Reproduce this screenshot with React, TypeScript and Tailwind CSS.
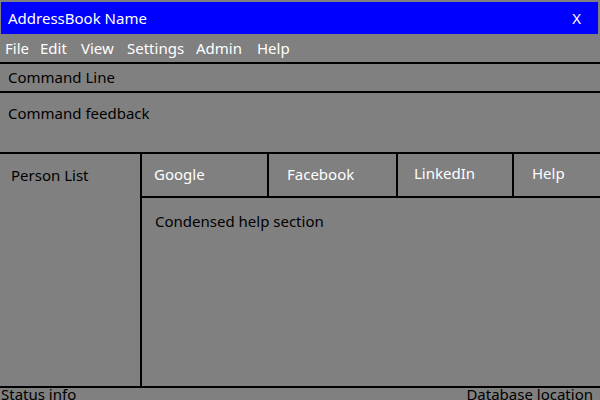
const menus = [
  { label: 'File', w: 'w-[35px]' },
  { label: 'Edit', w: 'w-[41px]' },
  { label: 'View', w: 'w-[46px]' },
  { label: 'Settings', w: 'w-[69px]' },
  { label: 'Admin', w: 'w-[61px]' },
  { label: 'Help', w: 'w-[40px]' },
];

const tabs = [
  { label: 'Google', cls: 'w-[125px] pl-[12px] pb-[2px]' },
  { label: 'Facebook', cls: 'w-[127px] pl-[18px] pb-[2px]' },
  { label: 'LinkedIn', cls: 'w-[114px] pl-[16px] pb-[4px]' },
  { label: 'Help', cls: 'flex-1 pl-[18px] pb-[3px]' },
];

function Line() {
  return <div className="h-[2px] bg-black" />;
}

export default function App() {
  return (
    <div
      className="w-[600px] h-[400px] overflow-hidden bg-[#808080] text-[15px] text-black flex flex-col"
      style={{ fontFamily: '"Noto Sans", "Open Sans", sans-serif' }}
    >
      {/* Title bar */}
      <div className="mt-[2px] ml-[1px] mr-[2px] h-[32px] bg-[#0000ff] text-white flex items-center justify-between pl-[7px] pr-[17px]">
        <span>AddressBook Name</span>
        <span>X</span>
      </div>

      {/* Menu */}
      <div className="h-[28px] flex items-center pl-[5px] text-white">
        {menus.map(m => (
          <span key={m.label} className={m.w}>
            {m.label}
          </span>
        ))}
      </div>
      <Line />

      <div className="h-[27px] flex items-center pl-[8px]">Command Line</div>
      <Line />

      <div className="h-[59px] pl-[8px] pt-[10px] leading-[20px]">Command feedback</div>
      <Line />

      {/* Main */}
      <div className="h-[232px] flex">
        <div className="w-[140px] pl-[11px] pt-[11px] leading-[20px]">Person List</div>
        <div className="w-[2px] bg-black" />
        <div className="flex-1 flex flex-col">
          <div className="h-[42px] flex text-white">
            {tabs.map((t, i) => (
              <div key={t.label} className="contents">
                {i > 0 && <div className="w-[2px] bg-black" />}
                <div className={`${t.cls} flex items-center`}>{t.label}</div>
              </div>
            ))}
          </div>
          <Line />
          <div className="flex-1 pl-[13px] pt-[13px] leading-[20px]">Condensed help section</div>
        </div>
      </div>
      <Line />

      {/* Status bar */}
      <div className="h-[12px] flex justify-between pl-[1px] pr-[7px] leading-[20px]">
        <span className="-mt-[4px]">Status info</span>
        <span className="-mt-[4px]">Database location</span>
      </div>
    </div>
  );
}
